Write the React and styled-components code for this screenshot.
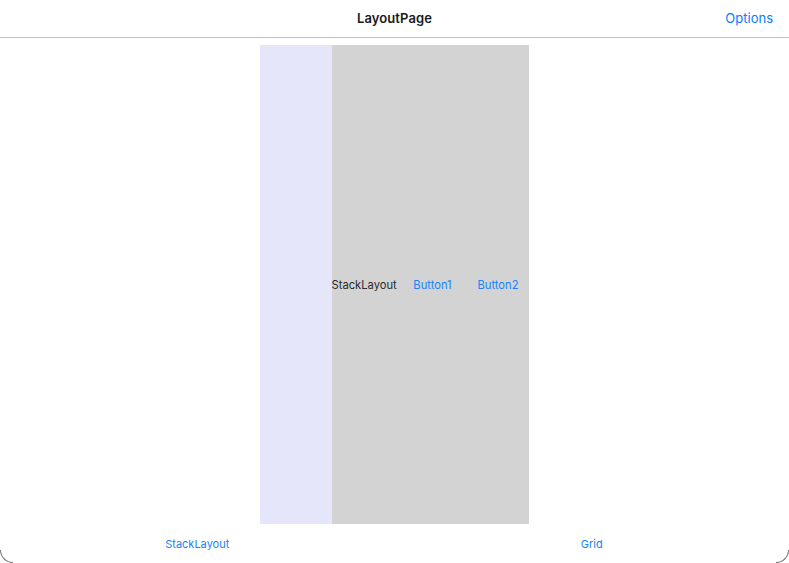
import React from "react";
import styled, { createGlobalStyle } from "styled-components";

const Global = createGlobalStyle`
  html, body { margin: 0; padding: 0; background: #fff; }
  body { font-family: Inter, "Noto Sans", "Liberation Sans", sans-serif; -webkit-font-smoothing: antialiased; }
  * { box-sizing: border-box; }
`;

const Screen = styled.div`
  position: relative;
  width: 789px;
  height: 563px;
  display: flex;
  flex-direction: column;
  background: #fff;
  overflow: hidden;
`;

const NavBar = styled.header`
  height: 38px;
  flex: none;
  border-bottom: 1px solid #c2c2c2;
  display: grid;
  grid-template-columns: 1fr auto 1fr;
  align-items: center;
  padding: 0 16px 1px;
`;

const Title = styled.div`
  grid-column: 2;
  font-size: 13px;
  font-weight: 600;
  color: #1a1a1a;
  letter-spacing: 0.1px;
`;

const NavAction = styled.button`
  grid-column: 3;
  justify-self: end;
  border: 0;
  background: none;
  padding: 0;
  font: inherit;
  font-size: 13px;
  color: #0a7aff;
`;

const Content = styled.main`
  flex: 1;
  display: flex;
  justify-content: center;
  align-items: flex-start;
  padding-top: 7px;
`;

const Stack = styled.div`
  display: flex;
  height: 479px;
  margin-left: -1px;
`;

const Column = styled.div`
  width: ${(p) => p.$w}px;
  background: ${(p) => p.$bg};
  display: flex;
  align-items: center;
  padding-top: 1px;
`;

const Label = styled.span`
  flex: none;
  font-size: 11.2px;
  color: #2a2a2a;
  width: 68px;
  white-space: nowrap;
`;

const LinkButton = styled.button`
  flex: none;
  border: 0;
  background: none;
  padding: 0;
  font: inherit;
  font-size: 11.2px;
  color: #1a82fb;
  width: ${(p) => p.$w}px;
  margin-left: ${(p) => p.$ml || 0}px;
  text-align: center;
  white-space: nowrap;
`;

const TabBar = styled.nav`
  height: 39px;
  flex: none;
  display: grid;
  grid-template-columns: 1fr 1fr;
  align-items: center;
  padding-top: 1px;
`;

const Tab = styled.div`
  text-align: center;
  font-size: 11px;
  color: #1a82fb;
`;

const Corner = styled.div`
  position: absolute;
  bottom: 0;
  width: 13px;
  height: 13px;
  border-bottom: 1px solid #777;
  ${(p) =>
    p.$side === "left"
      ? "left: 0; border-left: 1px solid #777; border-bottom-left-radius: 13px;"
      : "right: 0; border-right: 1px solid #777; border-bottom-right-radius: 13px;"}
`;

export default function App() {
  return (
    <>
      <Global />
      <Screen>
        <NavBar>
          <Title>LayoutPage</Title>
          <NavAction>Options</NavAction>
        </NavBar>
        <Content>
          <Stack>
            <Column $w={72} $bg="#e6e6fa" />
            <Column $w={197} $bg="#d3d3d3">
              <Label>StackLayout</Label>
              <LinkButton $w={66}>Button1</LinkButton>
              <LinkButton $w={61} $ml={2}>Button2</LinkButton>
            </Column>
          </Stack>
        </Content>
        <TabBar>
          <Tab>StackLayout</Tab>
          <Tab>Grid</Tab>
        </TabBar>
        <Corner $side="left" />
        <Corner $side="right" />
      </Screen>
    </>
  );
}
